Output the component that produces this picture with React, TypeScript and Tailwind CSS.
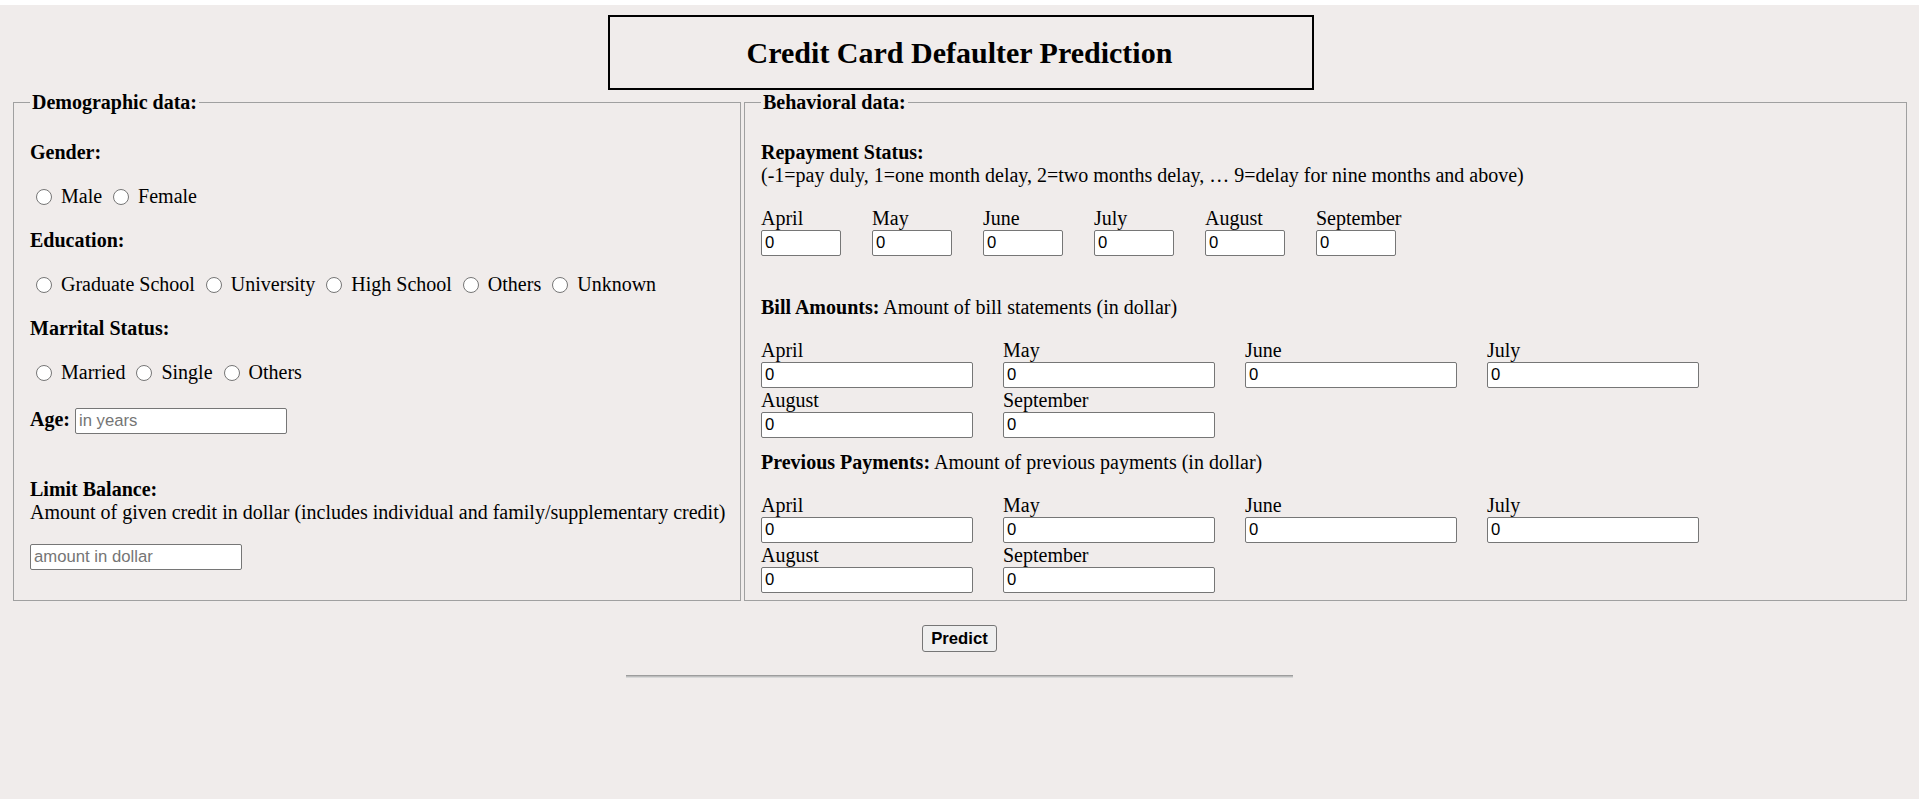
import React from 'react';

const months = ['April', 'May', 'June', 'July', 'August', 'September'];

// native-looking text box (Chrome defaults at 125%)
const inputCls =
  "block h-[26px] rounded-[2px] border border-[#767676] bg-white px-[3px] font-['Liberation_Sans',Arial,sans-serif] text-[16.7px] leading-[20px] text-black placeholder:text-[#757575] outline-none";

const Radio = ({ name, label }: { name: string; label: string }) => (
  <label className="mr-[5px] flex items-center">
    <input
      type="radio"
      name={name}
      className="ml-[6px] h-[16px] w-[16px] appearance-none rounded-full border border-[#767676] bg-white"
    />
    <span className="ml-[9px]">{label}</span>
  </label>
);

const MonthGrid = () => (
  <div className="mt-[20px] grid w-[938px] grid-cols-[repeat(4,212px)] gap-x-[30px] gap-y-[1px]">
    {months.map((m) => (
      <div key={m}>
        <div className="leading-[23px]">{m}</div>
        <input className={`${inputCls} w-[212px]`} defaultValue="0" />
      </div>
    ))}
  </div>
);

export default function App() {
  return (
    <div className="min-h-screen bg-white pt-[5px]">
      <div className="min-h-[794px] bg-[#f0eceb] pt-[10px] font-['Liberation_Serif','Times_New_Roman',serif] text-[20px] leading-[23px] text-black">
        {/* header */}
        <div className="mx-auto flex h-[75px] w-[706px] translate-x-[1px] items-center justify-center border-2 border-black">
          <h2 className="-translate-x-[1px] text-[30px] font-bold leading-[34px]">Credit Card Defaulter Prediction</h2>
        </div>

        <form className="mt-[1px] flex gap-[3px] px-[13px]" onSubmit={(e) => e.preventDefault()}>
          {/* demographic */}
          <fieldset className="w-[728px] min-w-0 shrink-0 border border-[#a0a0a0] pl-[16px] pr-[14px] pt-[27px] pb-[7px]">
            <legend className="px-[2px] font-bold leading-[23px]">Demographic data:</legend>

            <p className="font-bold">Gender:</p>
            <div className="mt-[21px] flex h-[23px] items-center">
              <Radio name="gender" label="Male" />
              <Radio name="gender" label="Female" />
            </div>

            <p className="mt-[21px] font-bold">Education:</p>
            <div className="mt-[21px] flex h-[23px] items-center">
              <Radio name="edu" label="Graduate School" />
              <Radio name="edu" label="University" />
              <Radio name="edu" label="High School" />
              <Radio name="edu" label="Others" />
              <Radio name="edu" label="Unknown" />
            </div>

            <p className="mt-[21px] font-bold">Marrital Status:</p>
            <div className="mt-[21px] flex h-[23px] items-center">
              <Radio name="marriage" label="Married" />
              <Radio name="marriage" label="Single" />
              <Radio name="marriage" label="Others" />
            </div>

            <div className="mt-[24px] flex items-start gap-[5px]">
              <b>Age:</b>
              <input className={`${inputCls} w-[212px]`} placeholder="in years" />
            </div>

            <p className="mt-[44px] whitespace-nowrap">
              <b>Limit Balance:</b>
              <br />
              Amount of given credit in dollar (includes individual and family/supplementary credit)
            </p>
            <input className={`${inputCls} mt-[20px] w-[212px]`} placeholder="amount in dollar" />
          </fieldset>

          {/* behavioral */}
          <fieldset className="w-[1163px] min-w-0 shrink-0 border border-[#a0a0a0] px-[16px] pt-[27px] pb-[7px]">
            <legend className="px-[2px] font-bold leading-[23px]">Behavioral data:</legend>

            <p>
              <b>Repayment Status:</b>
              <br />
              (-1=pay duly, 1=one month delay, 2=two months delay, … 9=delay for nine months and above)
            </p>
            <div className="mt-[20px] flex gap-[31px]">
              {months.map((m) => (
                <div key={m} className="w-[80px] whitespace-nowrap">
                  <div className="leading-[23px]">{m}</div>
                  <input className={`${inputCls} w-[80px]`} defaultValue="0" />
                </div>
              ))}
            </div>

            <p className="mt-[40px]">
              <b>Bill Amounts:</b> Amount of bill statements (in dollar)
            </p>
            <MonthGrid />

            <p className="mt-[13px]">
              <b>Previous Payments:</b> Amount of previous payments (in dollar)
            </p>
            <MonthGrid />
          </fieldset>
        </form>

        <div className="mt-[24px] flex justify-center">
          <button
            type="button"
            className="h-[27px] w-[75px] rounded-[3px] border border-[#767676] bg-[#efefef] font-['Liberation_Sans',Arial,sans-serif] text-[16.7px] font-bold leading-[20px] text-black"
          >
            Predict
          </button>
        </div>

        <div className="mx-auto mt-[23px] h-[3px] w-[667px] border-y border-t-[#9d9d9d] border-b-[#d8d8d8] bg-[#bdbdbd]" />
      </div>
    </div>
  );
}
